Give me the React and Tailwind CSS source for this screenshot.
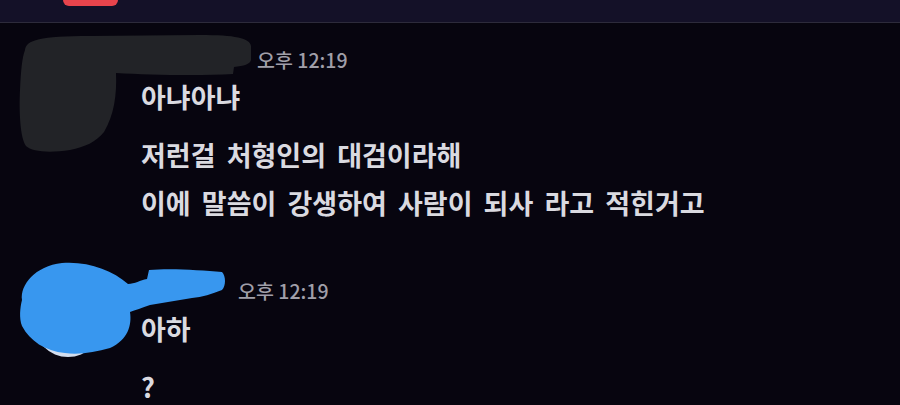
import React from 'react';

const messages = [
  {
    id: 1,
    nameWidth: 'w-[108px]',
    time: '오후 12:19',
    avatar: 'bg-[#2a2b30]',
    lines: ['아냐아냐', '저런걸 처형인의 대검이라해', '이에 말씀이 강생하여 사람이 되사 라고 적힌거고'],
    gaps: ['mt-[8px]', 'mt-[25px]', 'mt-[15px]'],
  },
  {
    id: 2,
    nameWidth: 'w-[89px]',
    time: '오후 12:19',
    avatar: 'bg-[#d3deee]',
    lines: ['아하', '?'],
    gaps: ['mt-[9px]', 'mt-[25px]'],
  },
];

function Message({ m, className = '' }) {
  return (
    <div className={`flex ${className}`}>
      <div className="w-[141px] shrink-0">
        <div className={`ml-[34px] mt-[10px] h-[68px] w-[68px] rounded-full ${m.avatar}`} />
      </div>
      <div className="flex flex-col">
        <div className="flex h-[24px] items-center gap-2">
          <span className={`${m.nameWidth} h-[20px]`} />
          <span className="text-[19.5px] leading-[24px] font-medium text-[#a09fa9]">{m.time}</span>
        </div>
        {m.lines.map((line, i) => (
          <p
            key={i}
            className={`${m.gaps[i]} text-[27px] leading-[33px] font-semibold text-[#dadae0] [word-spacing:5px] whitespace-nowrap`}
          >
            {line}
          </p>
        ))}
      </div>
    </div>
  );
}

export default function App() {
  return (
    <div className="relative h-[405px] w-[900px] overflow-hidden bg-[#07050f] font-['Noto_Sans_CJK_KR','Noto_Sans',sans-serif]">
      <header className="h-[23px] border-b border-[#2d2b3b] bg-[#141128]">
        <div className="ml-[63px] h-[6px] w-[55px] rounded-b-[7px] bg-[#e8444c]" />
      </header>

      <div className="pt-[25px]">
        <Message m={messages[0]} />
        <Message m={messages[1]} className="mt-[60px]" />
      </div>

      {/* redaction scribbles over avatars and names */}
      <svg className="pointer-events-none absolute left-0 top-0" width="900" height="405" viewBox="0 0 900 405">
        <path
          fill="#222327"
          d="M 25 50 C 26 40, 40 36, 90 36 L 200 35 C 235 35, 250 38, 251 46 L 251 60 C 250 64, 244 66, 234 67 L 233 74 C 200 76, 150 75, 116 73 C 117 95, 114 115, 104 132 C 96 142, 85 147, 70 150 C 50 153, 32 152, 26 146 C 20 138, 19 110, 20 90 C 21 70, 22 58, 25 50 Z"
        />
        <path
          fill="#3897ef"
          d="M 22 300 C 20 285, 35 266, 62 263 C 88 261, 112 270, 128 284 C 135 284, 140 280, 147 279 L 149 270 C 170 268, 200 270, 222 272 C 226 276, 226 286, 222 290 C 212 294, 202 297, 192 298 L 150 305 C 142 308, 135 310, 130 312 C 132 325, 128 340, 110 348 C 95 352, 80 355, 65 353 C 45 351, 30 341, 22 326 C 19 318, 20 308, 22 300 Z"
        />
      </svg>
    </div>
  );
}
